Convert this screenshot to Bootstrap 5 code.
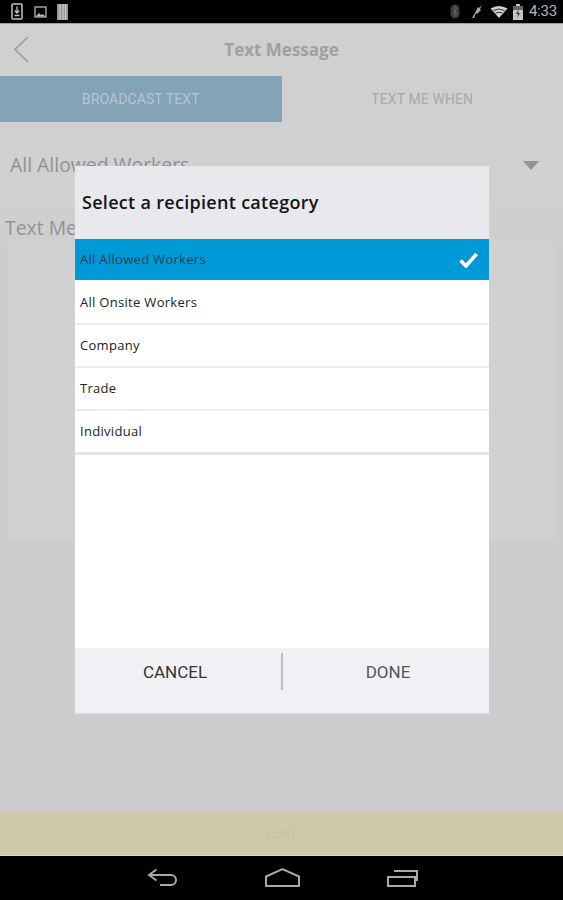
<!DOCTYPE html>
<html lang="en">
<head>
<meta charset="utf-8">
<title>Text Message</title>
<link href="https://cdn.jsdelivr.net/npm/bootstrap@5.3.0/dist/css/bootstrap.min.css" rel="stylesheet">
<style>
html,body{height:900px;overflow:hidden}
body{background:#cdcdcf;font-family:"Open Sans","Liberation Sans",sans-serif;position:relative}
.shell{height:900px}
.sysbar{height:24px;background:#000;border-bottom:1px solid #9a9a9a;padding:0 6px 0 11px;color:#b5b5b5}
.sys-time{font:15px/1 Roboto,sans-serif;letter-spacing:-.2px;margin-left:6px}
.apphead{height:52px;background:#d0d0d0}
.apphead .back{left:13px;top:12px}
.app-title{font-size:17px;font-weight:700;color:#a0a0a2}
.tabstrip{height:46px;background:#d0d0d0}
.tab-on,.tab-off{width:50%;font:14px/1 Roboto,sans-serif;letter-spacing:.1px}
.tab-on{background:#84a3b7;color:#b4c6d3}
.tab-off{color:#a9a9ab}
.selector{height:83px;background:#d1d1d1;padding:3px 24px 0 10px;font-size:19.4px;color:#909092}
.msg-label{height:40px;padding:8px 0 0 5px;font-size:19.4px;color:#939395;background:#cfcfcf}
.msg-box{height:295px;background:#d1d1d1;margin:0 8px}
.send-bar{height:45px;background:#d0c9a9;border-bottom:1px solid #e2dcc0;color:#c9c3a6;font:15px/1 Roboto,sans-serif;letter-spacing:.5px}
.navkeys{height:44px;background:#000;gap:87px;padding:0 0 1px 2px}
.dlg{position:absolute;left:75px;top:166px;width:414px;height:547px;background:#fff;box-shadow:0 1px 1px #dcdcde}
.dlg-head{height:73px;background:#e9e9ed;padding:0 7px 1px;font-size:18px;font-weight:600;color:#141416;letter-spacing:.3px}
.dlg-list{--bs-list-group-bg:#fff;--bs-list-group-border-width:0;border-radius:0}
.dlg-item{font-size:13px;color:#222224;padding:0 11px 0 5px!important;height:43px;border-bottom:2px solid #ececee!important;letter-spacing:.3px}
.dlg-item.first-row{height:41px;background:#0099d8;color:#16405a;border-bottom:0!important}
.dlg-item.second{height:45px;padding-top:2px!important}
.dlg-item.last-row{height:44px;border-bottom:3px solid #e6e6e8!important}
.dlg-foot{height:65px;background:#f1f1f5;font:17px/1 Roboto,sans-serif;color:#333}
.dlg-btn{flex:1 1 50%;padding:0 6px 17px 0;background:none;border:0;border-radius:0;font:inherit;color:#333;height:100%}
.dlg-btn.done{color:#555;padding:0 0 17px 4px}
.dlg-rule{width:2px;height:37px;margin-top:5px;background:#bdbdc0}
</style>
</head>
<body>
<div class="shell d-flex flex-column">
  <div class="sysbar d-flex align-items-center justify-content-between">
    <div class="d-flex align-items-center">
      <svg width="12" height="17" viewBox="0 0 12 17" fill="none" style="margin-right:11px"><rect x="1" y="1" width="10" height="15" rx="1" stroke="#c4c4c4" stroke-width="1.5"/><path d="M6 3.500v6M3.800 7.500 6 10l2.200-2.500M3.500 12.500h5" stroke="#c4c4c4" stroke-width="1.300"/></svg>
      <svg width="13" height="12" viewBox="0 0 13 12" fill="none" style="margin-right:10px"><rect x="1" y="1" width="11" height="10" stroke="#b5b5b5" stroke-width="1.300"/><path d="M1.500 10.500 5 7l2 2 2-1 2.500 2.500z" fill="#b5b5b5"/></svg>
      <svg width="11" height="16" viewBox="0 0 11 16"><rect width="11" height="16" fill="#9a9a9a"/><path d="M3 0v16M6 0v16M8.500 0v16" stroke="#ccc" stroke-width="1"/></svg>
    </div>
    <div class="d-flex align-items-center">
      <svg width="10" height="15" viewBox="0 0 10 15" style="margin-right:11px"><rect x=".5" y=".5" width="9" height="14" rx="4.500" fill="#3a3a3a"/><path d="M2.500 4.500 7.500 10 5 12.500V2.500L7.500 5 2.500 10.500" fill="none" stroke="#666"/></svg>
      <svg width="12" height="15" viewBox="0 0 12 15" style="margin-right:7px"><path d="M1 14 5 7l2-4 1 1 3-3-2 4 1 1-4 4-1-1-2 5z" fill="#a8a8a8"/></svg>
      <svg width="18" height="12" viewBox="0 0 17 12" style="margin-right:5px"><path d="M0 2.500Q8.500-2.500 17 2.500L8.500 12z" fill="#cfcfcf"/><path d="M3 4.500Q8.500 1.500 14 4.500M5 7q3.500-1.500 7 0" stroke="#333" fill="none"/></svg>
      <svg width="10" height="16" viewBox="0 0 10 16" ><path d="M3 0h4v2h3v14H0V2h3z" fill="#c4c4c4"/><path d="M0 2h10v4H0z" fill="#666"/><path d="M6 5 3 10h2l-1 4 3-5H5z" fill="#333"/></svg>
      <span class="sys-time">4:33</span>
    </div>
  </div>
  <div class="apphead position-relative d-flex align-items-center justify-content-center">
    <svg class="back position-absolute" width="17" height="27" viewBox="0 0 17 27" fill="none"><path d="M15 1 2 13.500 15 26" stroke="#9c9c9e" stroke-width="1.700"/></svg>
    <span class="app-title">Text Message</span>
  </div>
  <div class="tabstrip d-flex">
    <div class="tab-on d-flex align-items-center justify-content-center">BROADCAST TEXT</div>
    <div class="tab-off d-flex align-items-center justify-content-center">TEXT ME WHEN</div>
  </div>
  <div class="selector d-flex align-items-center justify-content-between">
    <span>All Allowed Workers</span>
    <svg width="16" height="9" viewBox="0 0 16 9"><path d="M0 0h16L8 9z" fill="#939395"/></svg>
  </div>
  <div class="msg-label">Text Message</div>
  <div class="msg-box"></div>
  <div class="flex-grow-1"></div>
  <div class="send-bar d-flex align-items-center justify-content-center">SEND</div>
  <div class="navkeys d-flex align-items-center justify-content-center">
    <svg width="31" height="19" viewBox="0 0 31 19" fill="none"><path d="M9.500 1.500 2 7l7.500 5.500M2 7h22a5 5 0 0 1 0 10H13" stroke="#a8a8a8" stroke-width="2"/></svg>
    <svg width="35" height="19" viewBox="0 0 35 19" fill="none"><path d="M17.500 1.200 34 8.500V18H1V8.500z" stroke="#a8a8a8" stroke-width="2" stroke-linejoin="round"/></svg>
    <svg width="31" height="18" viewBox="0 0 31 18" fill="none"><rect x="1" y="8" width="27" height="9" stroke="#a8a8a8" stroke-width="2"/><path d="M7 2h23v10" stroke="#a8a8a8" stroke-width="2"/></svg>
  </div>
</div>
<div class="dlg d-flex flex-column">
  <div class="dlg-head d-flex align-items-center">Select a recipient category</div>
  <div class="list-group dlg-list">
    <div class="list-group-item dlg-item first-row d-flex align-items-center justify-content-between">
      <span>All Allowed Workers</span>
      <svg width="19" height="16" viewBox="0 0 19 16"><path d="M1.500 8.500 7 14 17.500 2" fill="none" stroke="#fff" stroke-width="3.600"/></svg>
    </div>
    <div class="list-group-item dlg-item second d-flex align-items-center">All Onsite Workers</div>
    <div class="list-group-item dlg-item d-flex align-items-center">Company</div>
    <div class="list-group-item dlg-item d-flex align-items-center">Trade</div>
    <div class="list-group-item dlg-item last-row d-flex align-items-center">Individual</div>
  </div>
  <div class="flex-grow-1"></div>
  <div class="dlg-foot d-flex align-items-start">
    <button type="button" class="btn dlg-btn">CANCEL</button>
    <div class="dlg-rule"></div>
    <button type="button" class="btn dlg-btn done">DONE</button>
  </div>
</div>
<script src="https://cdn.jsdelivr.net/npm/bootstrap@5.3.0/dist/js/bootstrap.bundle.min.js"></script>
</body>
</html>
